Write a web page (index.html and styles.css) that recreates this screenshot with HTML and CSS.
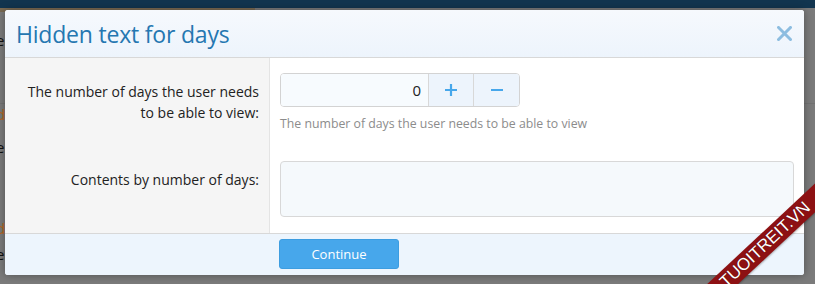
FILE: index.html
```html
<!DOCTYPE html>
<html>
<head>
<meta charset="utf-8">
<link rel="stylesheet" href="styles.css">
</head>
<body>
<div class="page">
  <div class="nav"></div>
  <div class="bg-strip"></div>
  <div class="bg-rows">
    <div class="bg-row bg-e r1">e</div>
    <div class="bg-row bg-d r2">d</div>
    <div class="bg-row bg-e r3">e</div>
    <div class="bg-row bg-d r4">d</div>
    <div class="bg-row bg-e r5">e</div>
  </div>
</div>

<div class="dialog">
  <div class="dlg-head">
    <h2 class="dlg-title">Hidden text for days</h2>
    <span class="dlg-close" aria-label="Close">
      <svg width="15" height="15" viewBox="0 0 15 15"><path d="M1.5 1.5 L13.5 13.5 M13.5 1.5 L1.5 13.5" stroke="#8dbde0" stroke-width="3" stroke-linecap="square"/></svg>
    </span>
  </div>
  <div class="dlg-body">
    <div class="row">
      <div class="label">The number of days the user needs<br>to be able to view:</div>
      <div class="field">
        <div class="num-group">
          <div class="num-input">0</div>
          <div class="num-btn">
            <svg width="14" height="14" viewBox="0 0 14 14"><path d="M7 1 V13 M1 7 H13" stroke="#47a7eb" stroke-width="2.2"/></svg>
          </div>
          <div class="num-btn">
            <svg width="14" height="14" viewBox="0 0 14 14"><path d="M1 7 H13" stroke="#47a7eb" stroke-width="2.2"/></svg>
          </div>
        </div>
        <div class="hint">The number of days the user needs to be able to view</div>
      </div>
    </div>
    <div class="row row2">
      <div class="label">Contents by number of days:</div>
      <div class="field">
        <div class="textarea"></div>
      </div>
    </div>
  </div>
  <div class="dlg-foot">
    <button class="btn">Continue</button>
  </div>
</div>

<div class="ribbon"><span>TUOITREIT.VN</span></div>
</body>
</html>
```

FILE: styles.css
```css
* { box-sizing: border-box; }
html, body { margin: 0; padding: 0; }
body {
  width: 815px;
  height: 284px;
  overflow: hidden;
  background: #7b7b7b;
  font-family: "Open Sans", "Noto Sans", sans-serif;
  position: relative;
}
.page { height: 284px; overflow: hidden; }
.nav { height: 8px; background: #12354f; }
.bg-strip { height: 4px; background: #7a6a52; margin-right: 560px; }
.bg-rows {
  font-family: "Open Sans", sans-serif;
  font-size: 15px;
  margin-left: -4px;
}
.bg-row { height: 20px; line-height: 20px; color: #111; }
.bg-d { color: #b8651a; }
.r1 { margin-top: 18px; }
.r2 { margin-top: 53px; border-top: 1px solid #727272; }
.r3 { margin-top: 14px; }
.r4 { margin-top: 61px; }
.r5 { margin-top: 6px; }

.dialog {
  position: absolute;
  left: 5px;
  top: 10px;
  width: 799px;
  height: 265px;
  background: #fff;
  border-radius: 3px;
  box-shadow: 0 0 8px rgba(0,0,0,0.35);
  overflow: hidden;
  display: flex;
  flex-direction: column;
}
.dlg-head {
  height: 48px;
  flex: none;
  display: flex;
  align-items: center;
  justify-content: space-between;
  padding: 0 11px;
  background: linear-gradient(to bottom, #f6f9fd, #edf4fc);
  border-bottom: 1px solid #d8d8d8;
}
.dlg-title {
  margin: 0;
  font-weight: 400;
  font-size: 23px;
  color: #2577b1;
  letter-spacing: -0.2px;
}
.dlg-close { display: flex; margin-right: 1px; }

.dlg-body {
  flex: 1;
  display: flex;
  flex-direction: column;
  background: linear-gradient(to right, #f5f5f5 0, #f5f5f5 264px, #e4e4e4 264px, #e4e4e4 265px, #fff 265px);
}
.row { display: flex; }
.label {
  width: 265px;
  flex: none;
  padding: 23px 11px 0 10px;
  text-align: right;
  font-size: 14px;
  line-height: 21px;
  color: #222;
}
.field { flex: 1; padding: 15px 10px 0 10px; }
.num-group {
  width: 240px;
  height: 34px;
  display: flex;
  border: 1px solid #d3d3d3;
  border-radius: 4px;
  overflow: hidden;
}
.num-input {
  flex: 1;
  background: #f7fbfe;
  text-align: right;
  padding-right: 7px;
  line-height: 32px;
  font-size: 15px;
  color: #222;
}
.num-btn {
  width: 45px;
  flex: none;
  display: flex;
  align-items: center;
  justify-content: center;
  background: #edf4fc;
  border-left: 1px solid #d8d8d8;
}
.num-btn:last-child { width: 46px; }
.hint {
  margin-top: 8px;
  font-size: 12.3px;
  line-height: 17px;
  color: #8c8c8c;
}
.row2 .field { padding-top: 29px; padding-bottom: 15px; }
.row2 .label { padding-top: 37px; }
.textarea {
  height: 56px;
  background: #f5f9fc;
  border: 1px solid #d8d8d8;
  border-radius: 4px;
}

.dlg-foot {
  height: 42px;
  flex: none;
  background: #edf5fd;
  border-top: 1px solid #d8d8d8;
  padding: 5px 0 0 274px;
}
.btn {
  width: 120px;
  height: 30px;
  background: #47a7eb;
  border: 1px solid #3d9de0;
  border-radius: 3px;
  color: #fff;
  font-family: "Open Sans", sans-serif;
  font-size: 13px;
  padding: 0;
}

.ribbon {
  position: absolute;
  left: 665px;
  top: 234px;
  width: 200px;
  height: 21px;
  background: #8d1113;
  transform: rotate(-43deg);
  transform-origin: center;
  display: flex;
  align-items: center;
  justify-content: center;
  box-shadow: 0 1px 2px rgba(0,0,0,0.3);
}
.ribbon span {
  color: #fff;
  font-family: "Liberation Sans", sans-serif;
  font-size: 17px;
  line-height: 17px;
  text-shadow: 0 0 1px #400;
}
```
